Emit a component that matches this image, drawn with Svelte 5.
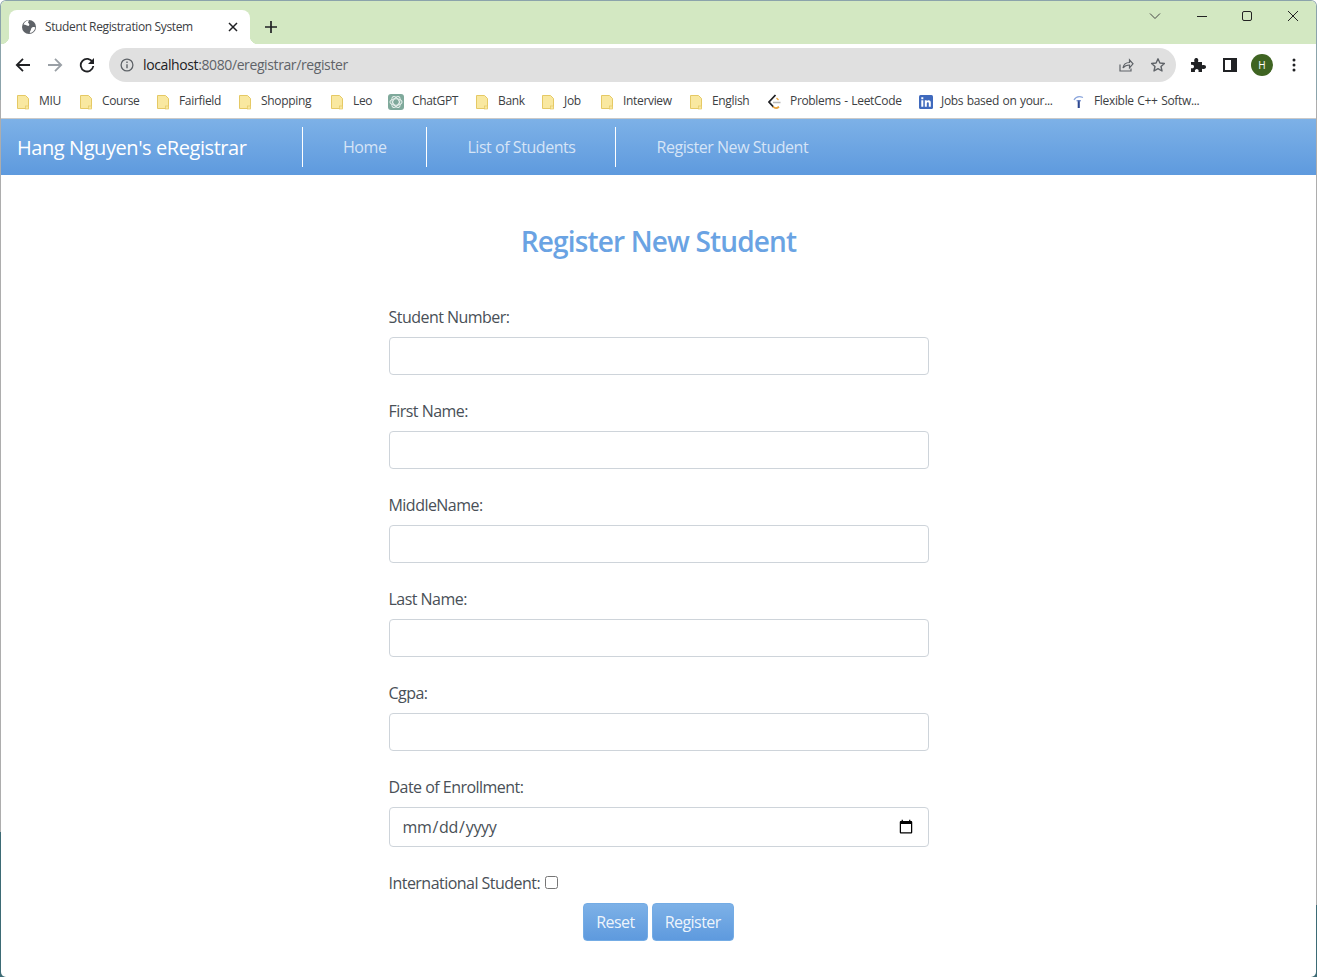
<script>
  const BOOKMARKS = [
    { label: 'MIU', width: 63 },
    { label: 'Course', width: 77 },
    { label: 'Fairfield', width: 82 },
    { label: 'Shopping', width: 92 },
    { label: 'Leo', width: 57 },
    { label: 'ChatGPT', width: 88, icon: 'gpt' },
    { label: 'Bank', width: 66 },
    { label: 'Job', width: 59 },
    { label: 'Interview', width: 89 },
    { label: 'English', width: 77 },
    { label: 'Problems - LeetCode', width: 152, icon: 'leet' },
    { label: 'Jobs based on your...', width: 152, icon: 'in' },
    { label: 'Flexible C++ Softw...', width: 140, icon: 'flex' },
  ]
  const FIELDS = ['Student Number:', 'First Name:', 'MiddleName:', 'Last Name:', 'Cgpa:']
</script>

<div class="window">
  <div class="inner">
    <div class="tabstrip">
      <div class="tab">
        <svg class="globe" viewBox="0 0 16 16" width="16" height="16">
          <circle cx="8" cy="8" r="7" fill="#5f6368" />
          <path d="M2.500 5.500c2 0 3 .8 4.200 1.300 1.300.5 1.800-.6 1.500-1.800L7 3.500l1-2.300C6 1 3.500 2.800 2.500 5.500zM14.300 8.500c-1.500-.8-3-.6-3.800.4-.8 1.100-.3 2.100-1.200 3-.5.600-.6 1.300-.4 2.200 2.800-.4 5-2.600 5.400-5.600z" fill="#fff" />
        </svg>
        <span class="tab-title">Student Registration System</span>
        <svg class="tab-close" viewBox="0 0 10 10" width="10" height="10">
          <path d="M1 1l8 8M9 1l-8 8" stroke="#202124" stroke-width="1.500" />
        </svg>
      </div>
      <svg class="newtab" viewBox="0 0 12 12" width="12" height="12">
        <path d="M6 0v12M0 6h12" stroke="#202124" stroke-width="1.700" />
      </svg>
      <div class="winctl">
        <svg viewBox="0 0 12 8" width="12" height="8"><path d="M1 1.500l5 5 5-5" fill="none" stroke="#444" /></svg>
        <svg viewBox="0 0 10 10" width="10" height="10"><path d="M0 5.500h10" stroke="#222" /></svg>
        <svg viewBox="0 0 10 10" width="10" height="10"><rect x=".5" y=".5" width="9" height="9" rx="1.500" fill="none" stroke="#222" /></svg>
        <svg viewBox="0 0 10 10" width="10" height="10"><path d="M0 0l10 10M10 0L0 10" stroke="#222" /></svg>
      </div>
    </div>

    <div class="toolbar">
      <svg class="tool" viewBox="0 0 16 16" width="16" height="16">
        <path d="M15 8H2M8 1.800L1.800 8 8 14.200" fill="none" stroke="#202124" stroke-width="1.800" />
      </svg>
      <svg class="tool" viewBox="0 0 16 16" width="16" height="16">
        <path d="M1 8h13M8 1.800L14.200 8 8 14.200" fill="none" stroke="#9aa0a6" stroke-width="1.800" />
      </svg>
      <svg class="tool" viewBox="0 0 16 16" width="16" height="16">
        <path d="M13.600 5.200A6.300 6.300 0 1 0 14.300 9" fill="none" stroke="#202124" stroke-width="1.800" />
        <path d="M15 1v6H9z" fill="#202124" />
      </svg>
      <div class="omnibox">
        <svg viewBox="0 0 14 14" width="14" height="14">
          <circle cx="7" cy="7" r="5.900" fill="none" stroke="#5f6368" stroke-width="1.300" />
          <path d="M7 6.200v4M7 3.600v1.400" stroke="#5f6368" stroke-width="1.400" />
        </svg>
        <span class="url"><b>localhost</b>:8080/eregistrar/register</span>
        <svg class="omni-share" viewBox="0 0 16 16" width="16" height="16">
          <path d="M2 7.500v6.500h11v-2.500M5 11c.5-3.500 3-5.500 6.500-5.500V2.800L15 6.800l-3.500 4V8C9 8 6.500 9 5 11z" fill="none" stroke="#5f6368" stroke-width="1.200" />
        </svg>
        <svg class="omni-star" viewBox="0 0 16 16" width="16" height="16">
          <path d="M8 1.800l1.900 4.200 4.500.5-3.400 3 1 4.500L8 11.700 4 14l1-4.500-3.400-3 4.500-.5z" fill="none" stroke="#5f6368" stroke-width="1.400" stroke-linejoin="round" />
        </svg>
      </div>
      <svg class="puzzle" viewBox="0 0 16 16" width="16" height="16">
        <path d="M1 5h3.500c-.8-3 .5-4 1.800-4s2.600 1 1.700 4H12v3.300c3-.8 4 .5 4 1.700s-1 2.500-4 1.700V15H8.500c.6-2.200-.6-3-1.700-3s-2.300.8-1.800 3H1v-3.800c2.200.6 3-.6 3-1.700S3.200 7.200 1 7.800z" fill="#202124" />
      </svg>
      <svg class="side" viewBox="0 0 14 14" width="14" height="14">
        <path d="M0 0h14v14H0z M2 2v10h6V2z" fill="#202124" fill-rule="evenodd" />
      </svg>
      <div class="avatar">H</div>
      <svg class="kebab" viewBox="0 0 4 14" width="4" height="14">
        <circle cx="2" cy="2" r="1.500" fill="#202124" />
        <circle cx="2" cy="7" r="1.500" fill="#202124" />
        <circle cx="2" cy="12" r="1.500" fill="#202124" />
      </svg>
    </div>

    <div class="bookmarks">
      {#each BOOKMARKS as b}
        <div class="bookmark" style:width="{b.width}px">
          {#if b.icon === 'gpt'}
            <svg viewBox="0 0 16 16" width="16" height="16">
              <rect width="16" height="16" rx="3" fill="#7fa99b" />
              <g fill="none" stroke="#e6efeb" stroke-width="1.100">
                <ellipse cx="8" cy="8" rx="6" ry="3.200" />
                <ellipse cx="8" cy="8" rx="6" ry="3.200" transform="rotate(60 8 8)" />
                <ellipse cx="8" cy="8" rx="6" ry="3.200" transform="rotate(120 8 8)" />
              </g>
            </svg>
          {:else if b.icon === 'leet'}
            <svg viewBox="0 0 15 16" width="15" height="16">
              <path d="M8.500 1L2 8l4.500 5" fill="none" stroke="#202124" stroke-width="1.800" />
              <path d="M6 8.500h7.500" stroke="#b8b8b8" stroke-width="1.600" />
              <path d="M6 12.500c1.800 2 4 2 6 .3" fill="none" stroke="#e8a33d" stroke-width="1.800" />
              <path d="M9.500 4l2 2" stroke="#e8a33d" stroke-width="1.200" />
            </svg>
          {:else if b.icon === 'in'}
            <svg viewBox="0 0 14 14" width="14" height="14">
              <rect width="14" height="14" rx="1.500" fill="#3f69bd" />
              <path d="M2.300 5.300h2v6.500h-2zM2.300 2.300h2v2h-2zM5.800 5.300h2v1c.8-1.500 4-1.700 4 1.200v4.300h-2V8.300c0-1.500-2-1.500-2 0v3.500h-2z" fill="#fff" />
            </svg>
          {:else if b.icon === 'flex'}
            <svg viewBox="0 0 15 16" width="15" height="16">
              <path d="M3 6c2-3.500 5.500-4 9-2.500" fill="none" stroke="#8aa5dc" stroke-width="1.200" />
              <path d="M6.700 6.200h2.100V14H6.700z" fill="#2c468f" />
              <path d="M5.500 6.800h4.500" stroke="#5a78c0" />
            </svg>
          {:else}
            <svg class="folder" viewBox="0 0 12 16" width="12" height="16">
              <path d="M.5 1.500h8l3 3v10h-11z" fill="#f9e8a0" stroke="#e5c965" />
              <rect x="8.500" y="12" width="3" height="3" fill="#f9e8a0" stroke="#e5c965" stroke-width=".7" />
            </svg>
          {/if}
          <span>{b.label}</span>
        </div>
      {/each}
    </div>

    <nav class="navbar">
      <div class="brand">Hang Nguyen's eRegistrar</div>
      <div class="navlink">Home</div>
      <div class="navlink">List of Students</div>
      <div class="navlink">Register New Student</div>
    </nav>

    <main class="page">
      <h1>Register New Student</h1>
      <form onsubmit={(e) => e.preventDefault()}>
        {#each FIELDS as f}
          <div class="field">
            <label for={f}>{f}</label>
            <input id={f} type="text" />
          </div>
        {/each}
        <div class="field">
          <label for="doe">Date of Enrollment:</label>
          <input id="doe" type="date" class="date" />
        </div>
        <div class="check">
          <label for="intl">International Student:</label>
          <input id="intl" type="checkbox" />
        </div>
        <div class="actions">
          <button type="reset">Reset</button>
          <button type="submit">Register</button>
        </div>
      </form>
    </main>
  </div>
</div>

<style>
  :global(body) {
    background: #fff;
  }

  /* the window edge changes colour down each side, so it is painted as background */
  .window {
    height: 977px;
    box-sizing: border-box;
    padding: 1px 1px 0;
    overflow: hidden;
    border-radius: 6px 6px 0 0;
    background-color: #8ba3ab;
    background-image:
      linear-gradient(transparent 969px, #3d6b75 0),
      linear-gradient(#8ba3ab 100px, #adadad 0, #adadad 832px, #3d6b75 0),
      linear-gradient(#8ba3ab 100px, #adadad 0, #adadad 905px, #3d6b75 0);
    background-size: 100% 100%, 1px 100%, 1px 100%;
    background-position: 0 0, left top, right top;
    background-repeat: no-repeat;
    font-family: "Open Sans", "Noto Sans", sans-serif;
  }

  .inner {
    height: 976px;
    overflow: hidden;
    background: #fff;
    border-radius: 5px;
  }

  .tabstrip {
    height: 43px;
    background: #d3e8c2;
    display: flex;
    align-items: flex-end;
  }

  .tab {
    margin-left: 8px;
    width: 241px;
    height: 34px;
    box-sizing: border-box;
    padding: 0 12px;
    background: #fff;
    border-radius: 8px 8px 0 0;
    display: flex;
    align-items: center;
    gap: 8px;
    position: relative;
    font-size: 12px;
    color: #3c4043;
  }
  .tab::before,
  .tab::after {
    content: '';
    position: absolute;
    bottom: 0;
    width: 8px;
    height: 8px;
  }
  .tab::before {
    left: -8px;
    background: radial-gradient(circle at 0 0, transparent 8px, #fff 8.5px);
  }
  .tab::after {
    right: -8px;
    background: radial-gradient(circle at 100% 0, transparent 8px, #fff 8.5px);
  }

  .tab-title {
    flex: 1;
    white-space: nowrap;
    letter-spacing: -.37px;
    margin-top: -1px;
  }

  .newtab {
    margin: 0 0 11px 15px;
  }

  .winctl {
    margin-left: auto;
    align-self: flex-start;
    width: 149px;
    margin-right: 18px;
    margin-top: 10px;
    display: flex;
    align-items: center;
    justify-content: space-between;
  }

  .toolbar {
    height: 41px;
    background: #fff;
    display: flex;
    align-items: center;
    padding-left: 14px;
  }
  .tool {
    margin-right: 16px;
    flex: none;
  }

  .omnibox {
    margin-left: -2px;
    width: 1067px;
    height: 34px;
    box-sizing: border-box;
    background: #e0e0e0;
    border-radius: 17px;
    display: flex;
    align-items: center;
    padding: 0 10px 0 11px;
    font-size: 14px;
  }
  .url {
    margin-left: 9px;
    color: #5f6368;
    flex: 1;
    letter-spacing: -.39px;
  }
  .url b {
    font-weight: 400;
    color: #202124;
  }
  .omni-share {
    margin-right: 16px;
  }

  .puzzle {
    margin-left: 14px;
  }
  .side {
    margin-left: 17px;
  }
  .avatar {
    margin-left: 14px;
    width: 22px;
    height: 22px;
    border-radius: 50%;
    background: #3f6422;
    color: #fff;
    font-size: 10px;
    display: flex;
    align-items: center;
    justify-content: center;
  }
  .kebab {
    margin-left: 19px;
  }

  .bookmarks {
    height: 33px;
    background: #fff;
    display: flex;
    align-items: center;
    padding-left: 16px;
    font-size: 12px;
    color: #3c4043;
  }
  .bookmark {
    display: flex;
    align-items: center;
    gap: 8px;
    flex: none;
    white-space: nowrap;
    letter-spacing: -.33px;
    word-spacing: .8px;
  }
  .bookmark svg {
    flex: none;
  }
  .bookmark span {
    margin-top: -2px;
  }
  .folder {
    margin-right: 2px;
  }

  .navbar {
    height: 57px;
    box-sizing: border-box;
    border-top: 1px solid #c9c9c9;
    background: linear-gradient(#7db1e7, #5e9ade);
    display: flex;
    align-items: center;
    color: #fff;
  }
  .brand {
    width: 285px;
    padding-left: 16px;
    font-size: 20px;
    white-space: nowrap;
    letter-spacing: -.43px;
  }
  .navlink {
    height: 40px;
    display: flex;
    align-items: center;
    padding: 0 40px;
    border-left: 1px solid #fff;
    font-size: 16px;
    color: rgba(255, 255, 255, .72);
    letter-spacing: -.45px;
    white-space: nowrap;
  }

  .page {
    width: 540px;
    margin: 0 auto;
    padding-top: 48px;
  }

  h1 {
    margin: 0 0 48px;
    text-align: center;
    color: #6aa3e3;
    font-size: 28px;
    line-height: 36px;
    height: 34px;
    font-weight: 600;
    letter-spacing: -.85px;
  }

  .field {
    margin-bottom: 24px;
  }
  label {
    display: block;
    color: #495057;
    font-size: 16px;
    line-height: 24px;
    letter-spacing: -.53px;
  }
  .field label {
    margin-bottom: 8px;
  }
  input[type="text"],
  .date {
    display: block;
    width: 100%;
    height: 38px;
    box-sizing: border-box;
    padding: 6px 12px;
    border: 1px solid #ced4da;
    border-radius: 4px;
    background: #fff;
    color: #495057;
    font-family: inherit;
    font-size: 16px;
  }
  .date {
    height: 40px;
    letter-spacing: -.3px;
  }

  .check {
    margin-top: 16px;
    display: flex;
    align-items: center;
    gap: 5px;
  }
  .check input {
    margin: -2px 0 0;
    width: 13px;
    height: 13px;
  }

  .actions {
    margin-top: 8px;
    display: flex;
    justify-content: center;
    gap: 4px;
  }
  button {
    height: 38px;
    padding: 0 12px;
    border: 1px solid #74ace5;
    border-radius: 4px;
    background: linear-gradient(#7db1e7, #5e9ade);
    color: rgba(255, 255, 255, .9);
    font-family: inherit;
    font-size: 16px;
    letter-spacing: -.54px;
  }
</style>
